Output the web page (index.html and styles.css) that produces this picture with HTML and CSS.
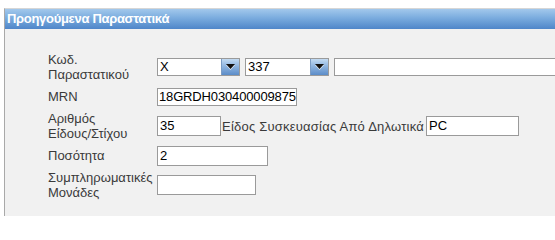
FILE: index.html
```html
<!DOCTYPE html>
<html>
<head>
<meta charset="utf-8">
<link rel="stylesheet" href="styles.css">
</head>
<body>
<div class="panel">
  <div class="header">Προηγούμενα Παραστατικά</div>
  <div class="form">
    <div class="label">Κωδ.<br>Παραστατικού</div>
    <div class="ctrl">
      <div class="select s1"><span class="val">X</span><span class="btn"><svg width="9" height="6" viewBox="0 0 9 6"><path d="M0 0 H9 L4.5 5 Z" fill="#111"/></svg></span></div>
      <div class="select s2"><span class="val">337</span><span class="btn"><svg width="9" height="6" viewBox="0 0 9 6"><path d="M0 0 H9 L4.5 5 Z" fill="#111"/></svg></span></div>
      <div class="input wide"></div>
    </div>
    <div class="label">MRN</div>
    <div class="ctrl"><div class="input mrn">18GRDH030400009875</div></div>
    <div class="label">Αριθμός<br>Είδους/Στίχου</div>
    <div class="ctrl">
      <div class="input tall w64">35</div>
      <span class="inline">Είδος Συσκευασίας Από Δηλωτικά</span>
      <div class="input tall w93">PC</div>
    </div>
    <div class="label">Ποσότητα</div>
    <div class="ctrl"><div class="input tall w111">2</div></div>
    <div class="label">Συμπληρωματικές<br>Μονάδες</div>
    <div class="ctrl"><div class="input tall w99"></div></div>
  </div>
</div>
</body>
</html>
```

FILE: styles.css
```css
html, body {
  margin: 0;
  padding: 0;
  background: #ffffff;
  overflow: hidden;
}
html { height: 216px; }
body {
  font-family: "Liberation Sans", Arial, sans-serif;
  font-size: 13px;
  width: 555px;
  height: 216px;
  padding-top: 8px;
  box-sizing: border-box;
}
.panel {
  margin-left: 4px;
  border-left: 1px solid #a9a9a9;
  border-top: 1px solid #d6d6d6;
  background: #f1f1f1;
  height: 208px;
  box-sizing: border-box;
  overflow: hidden;
}
.header {
  height: 20px;
  line-height: 20px;
  background: linear-gradient(to bottom, #a2c8ec 0%, #7eafe0 40%, #4f86c9 100%);
  color: #ffffff;
  font-weight: bold;
  font-size: 13px;
  letter-spacing: -0.3px;
  padding-left: 2px;
  white-space: nowrap;
}
.form {
  display: grid;
  grid-template-columns: 109px 1fr;
  grid-template-rows: 30px 29px 30px 29px 29px;
  padding: 23px 0 0 43px;
}
.label {
  color: #3a3a3a;
  line-height: 15px;
  align-self: center;
  white-space: nowrap;
}
.ctrl {
  display: flex;
  align-items: center;
  gap: 5px;
  white-space: nowrap;
  overflow: hidden;
  min-width: 0;
}
.select {
  display: flex;
  height: 18px;
  box-sizing: border-box;
  border: 1px solid #9a9a9a;
  background: #fff;
  flex: none;
}
.s1 { width: 83px; }
.s2 { width: 84px; }
.val {
  flex: 1;
  line-height: 16px;
  padding-left: 2px;
  color: #000;
}
.btn {
  width: 18px;
  height: 16px;
  box-sizing: border-box;
  border-left: 1px solid #7b9cc4;
  background: linear-gradient(to bottom, #c3dbf2 0%, #8fb5e0 45%, #5b8cc8 100%);
  display: flex;
  align-items: center;
  justify-content: center;
}
.btn svg {
  display: block;
  filter: drop-shadow(0 1px 0 rgba(255,255,255,0.8));
}
.input {
  height: 18px;
  box-sizing: border-box;
  border: 1px solid #9a9a9a;
  background: #fff;
  line-height: 16px;
  padding-left: 2px;
  color: #000;
  flex: none;
}
.input.tall {
  height: 20px;
  line-height: 18px;
}
.wide { width: 240px; }
.mrn { width: 140px; padding-left: 1px; letter-spacing: -0.15px; }
.w64 { width: 64px; }
.w93 { width: 93px; }
.w111 { width: 111px; }
.w99 { width: 99px; }
.inline {
  color: #3a3a3a;
  letter-spacing: 0.22px;
  margin: 0 -3px 0 -4px;
}
```
